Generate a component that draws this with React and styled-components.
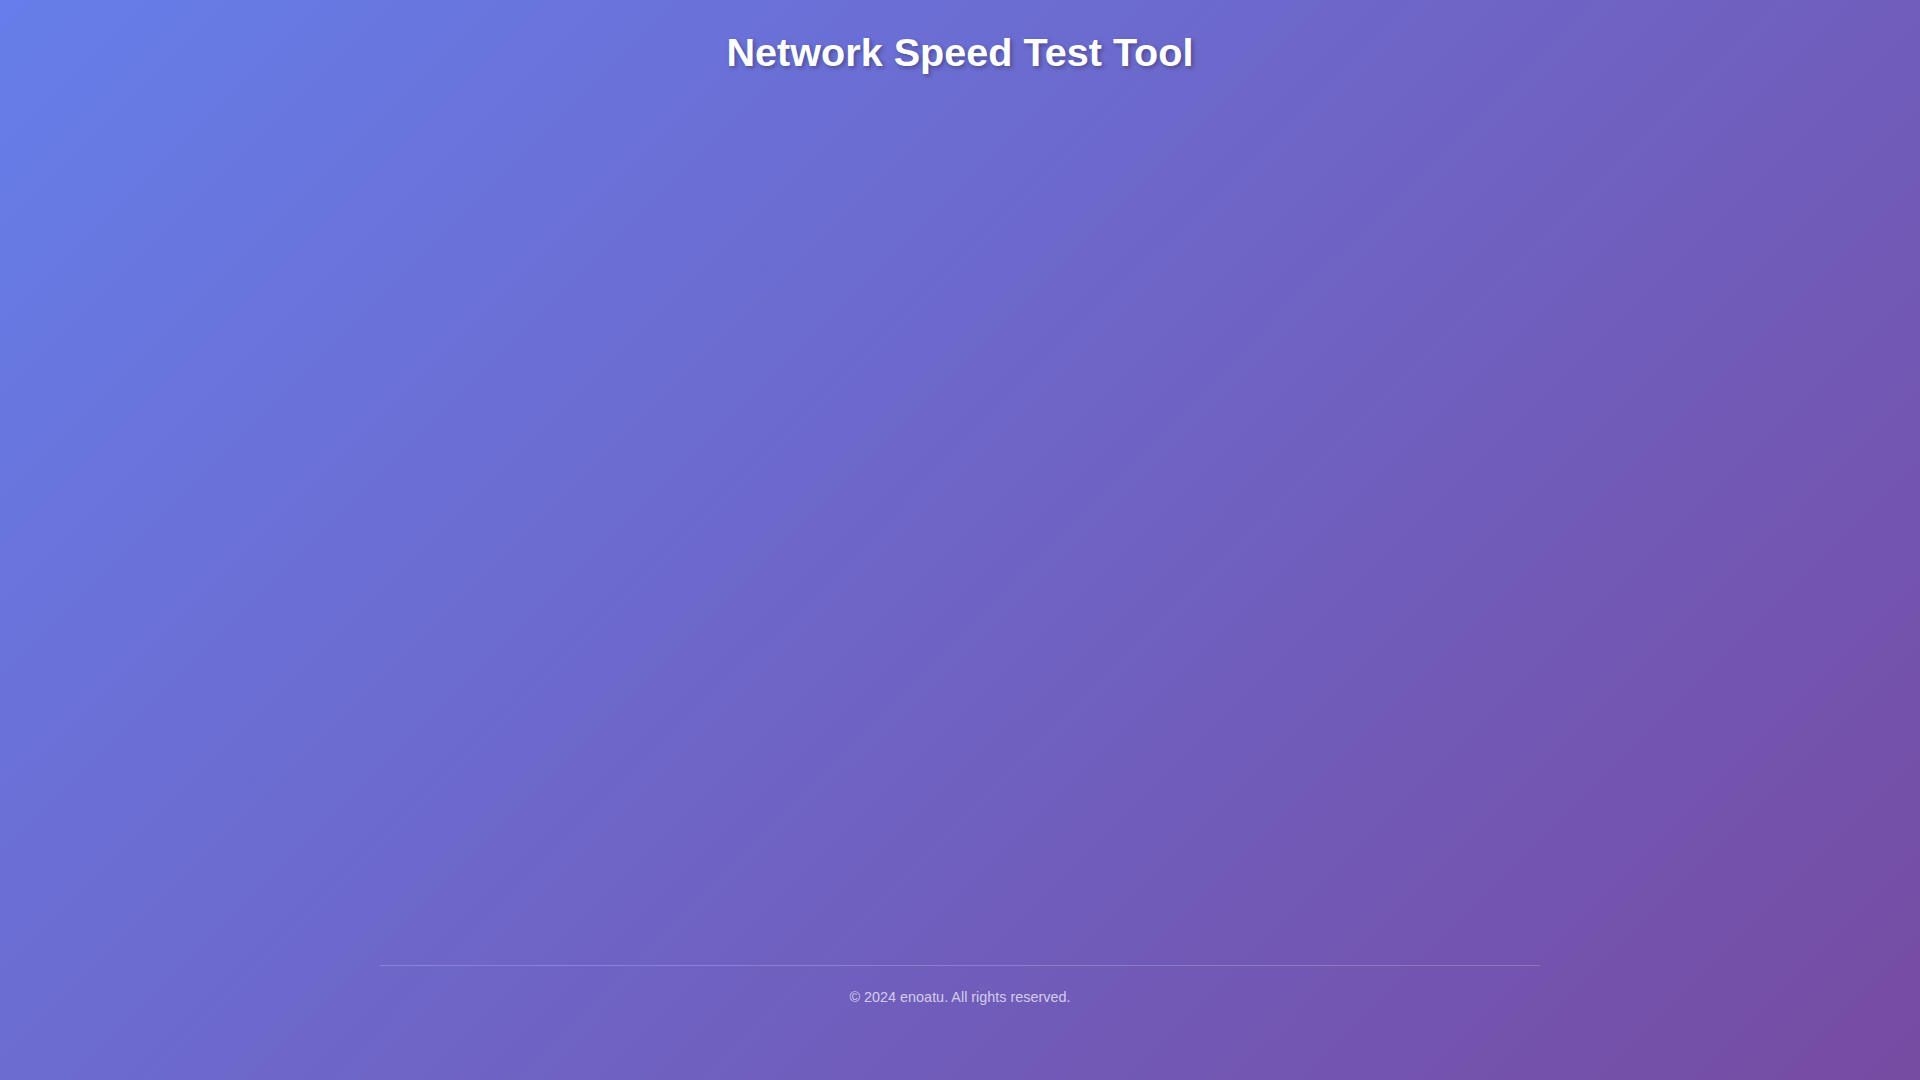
import React from "react";
import styled, { createGlobalStyle } from "styled-components";

const GlobalStyle = createGlobalStyle`
  * { box-sizing: border-box; }
  html, body { margin: 0; padding: 0; }
  body {
    font-family: "Liberation Sans", Arial, Helvetica, sans-serif;
    line-height: 1.6;
    color: #fff;
    background: linear-gradient(135deg, #667eea 0%, #764ba2 100%);
    min-height: 100vh;
  }
`;

const Page = styled.div`
  min-height: 100vh;
  background: linear-gradient(135deg, #667eea 0%, #764ba2 100%);
`;

const Container = styled.div`
  max-width: 1200px;
  margin: 0 auto;
  min-height: 100vh;
  padding: 20px 20px 51px;
  display: flex;
  flex-direction: column;
`;

const Header = styled.header`
  text-align: center;
`;

const Title = styled.h1`
  margin: 0;
  font-size: 39.6px;
  font-weight: 700;
  line-height: 64px;
  color: #fff;
  text-shadow: 2px 2px 4px rgba(0, 0, 0, 0.3);
`;

const Main = styled.main`
  flex: 1;
`;

const Footer = styled.footer`
  border-top: 1px solid rgba(255, 255, 255, 0.2);
  padding: 20px 0;
  text-align: center;
`;

const FooterText = styled.p`
  margin: 0;
  font-size: 14.4px;
  line-height: 1.6;
  color: rgba(255, 255, 255, 0.7);
`;

export default function App() {
  return (
    <>
      <GlobalStyle />
      <Page>
        <Container>
          <Header>
            <Title>Network Speed Test Tool</Title>
          </Header>
          <Main />
          <Footer>
            <FooterText>© 2024 enoatu. All rights reserved.</FooterText>
          </Footer>
        </Container>
      </Page>
    </>
  );
}
